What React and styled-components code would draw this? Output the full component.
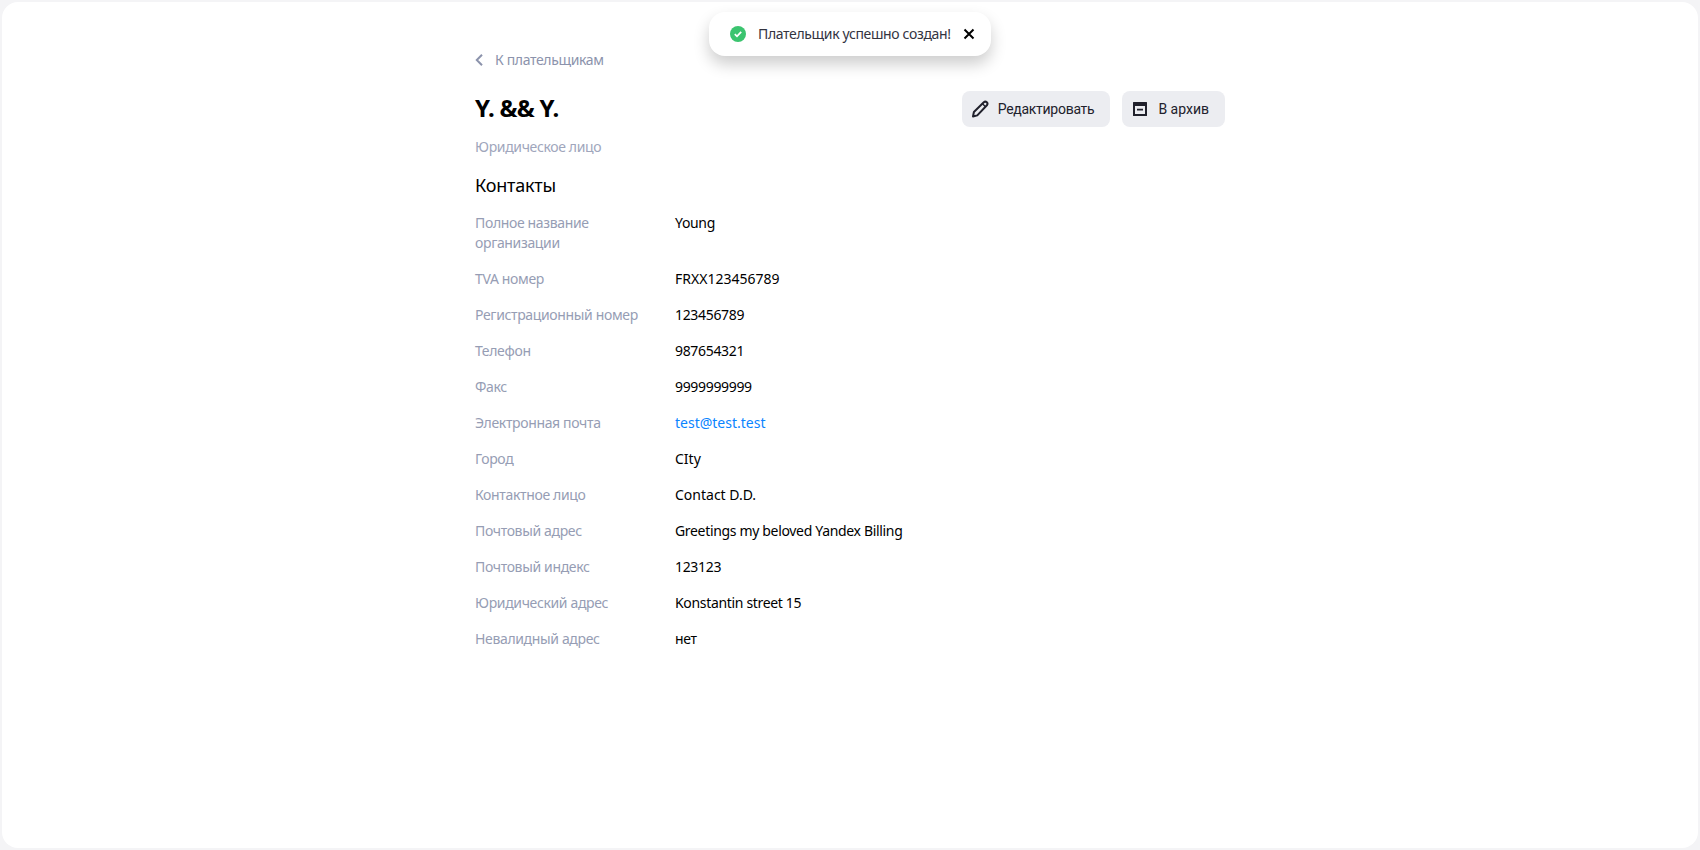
import React from 'react'
import styled, { createGlobalStyle } from 'styled-components'

const GlobalStyle = createGlobalStyle`
    html, body {
        margin: 0;
        height: 100%;
        background: #f4f4f6;
    }
    #root {
        height: 100%;
    }
`

const Frame = styled.div`
    box-sizing: border-box;
    height: 850px;
    padding: 2px;
    position: relative;
    overflow: hidden;
    font-family: "Noto Sans", "Open Sans", sans-serif;
    letter-spacing: -0.35px;
`

const Panel = styled.main`
    box-sizing: border-box;
    height: 100%;
    background: #fff;
    border-radius: 16px;
    padding: 47px 473px 0;
`

const Toast = styled.div`
    position: absolute;
    top: 12px;
    left: 709px;
    width: 282px;
    height: 44px;
    box-sizing: border-box;
    padding: 0 16px 0 21px;
    display: flex;
    align-items: center;
    background: #fff;
    border-radius: 16px;
    box-shadow: 0 8px 16px rgba(0, 0, 0, 0.2);
    color: #33333f;
    font-size: 14px;
`

const ToastText = styled.span`
    margin: 0 0 2px 12px;
    flex: 1;
    white-space: nowrap;
`

const Back = styled.a`
    display: flex;
    align-items: center;
    gap: 12px;
    height: 20px;
    color: #8c93ac;
    font-size: 14px;

    & > svg {
        margin-top: 2px;
    }
`

const Head = styled.div`
    display: flex;
    justify-content: space-between;
    align-items: center;
    margin-top: 22px;
    height: 36px;
`

const Title = styled.h1`
    margin: -4px 0 0;
    font-size: 24px;
    font-weight: 700;
    letter-spacing: -0.7px;
    color: #000;
`

const Actions = styled.div`
    display: flex;
    gap: 12px;
`

const Button = styled.button`
    display: flex;
    align-items: center;
    gap: 8px;
    height: 36px;
    padding: 0 16px 0 10px;
    border: 0;
    border-radius: 8px;
    background: #ecedf1;
    color: #21212c;
    font-family: Roboto, Inter, sans-serif;
    font-size: 14px;
    letter-spacing: ${p => p.$spacing || '0'};
`

const Kind = styled.div`
    margin-top: 10px;
    color: #a0a6bc;
    font-size: 14px;
    line-height: 20px;
`

const Section = styled.h2`
    margin: 14px 0 0;
    font-size: 18px;
    font-weight: 400;
    letter-spacing: -0.2px;
    line-height: 28px;
    color: #000;
`

const Rows = styled.dl`
    margin: 14px 0 0;
    display: grid;
    grid-template-columns: 200px 1fr;
    row-gap: 16px;
    font-size: 14px;
    line-height: 20px;
`

const Label = styled.dt`
    color: #969db4;
    width: 175px;
`

const Value = styled.dd`
    margin: 0;
    color: ${p => (p.$link ? '#0a84ff' : '#000')};
    letter-spacing: ${p => (p.$wide ? '0' : '-0.33px')};
`

const rows = [
    ['Полное название организации', 'Young'],
    ['TVA номер', 'FRXX123456789', false, true],
    ['Регистрационный номер', '123456789'],
    ['Телефон', '987654321'],
    ['Факс', '9999999999'],
    ['Электронная почта', 'test@test.test', true, true],
    ['Город', 'CIty', false, true],
    ['Контактное лицо', 'Contact D.D.', false, true],
    ['Почтовый адрес', 'Greetings my beloved Yandex Billing'],
    ['Почтовый индекс', '123123'],
    ['Юридический адрес', 'Konstantin street 15'],
    ['Невалидный адрес', 'нет'],
]

function App() {
    return (
        <Frame>
            <GlobalStyle />
            <Panel>
                <Back>
                    <svg width="8" height="14" viewBox="0 0 8 14" fill="none">
                        <path d="M7 1.800 1.800 7 7 12.200" stroke="#8c93ac" strokeWidth="2" />
                    </svg>
                    К плательщикам
                </Back>
                <Head>
                    <Title>Y. &amp;&amp; Y.</Title>
                    <Actions>
                        <Button $spacing="-0.28px">
                            <svg width="18" height="18" viewBox="0 0 18 18" fill="none">
                                <path d="M1 16.500 1.900 12 11.800 2.200a2.200 2.200 0 0 1 3.100 3.100L5.300 15.400Z" stroke="#21212c" strokeWidth="2" strokeLinejoin="round" />
                                <path d="M10.500 3.800l3 3" stroke="#21212c" strokeWidth="1.400" />
                            </svg>
                            Редактировать
                        </Button>
                        <Button>
                            <svg width="18" height="18" viewBox="0 0 18 18">
                                <path fillRule="evenodd" d="M1.500 2h13a.5.5 0 0 1 .5.5v13a.5.5 0 0 1-.5.5h-13a.5.5 0 0 1-.5-.5v-13a.5.5 0 0 1 .5-.5ZM3 6v8h10V6ZM5 8.800h6v1.600H5Z" fill="#21212c" />
                            </svg>
                            В архив
                        </Button>
                    </Actions>
                </Head>
                <Kind>Юридическое лицо</Kind>
                <Section>Контакты</Section>
                <Rows>
                    {rows.map(([label, value, link, wide]) => (
                        <React.Fragment key={label}>
                            <Label>{label}</Label>
                            <Value $link={link} $wide={wide}>{value}</Value>
                        </React.Fragment>
                    ))}
                </Rows>
            </Panel>
            <Toast>
                <svg width="16" height="16" viewBox="0 0 16 16">
                    <circle cx="8" cy="8" r="8" fill="#3bc46f" />
                    <path d="M4.800 8.200 7 10.300 11.200 5.900" fill="none" stroke="#fff" strokeWidth="1.800" />
                </svg>
                <ToastText>Плательщик успешно создан!</ToastText>
                <svg width="12" height="12" viewBox="0 0 12 12">
                    <path d="M1.500 1.500l9 9M10.500 1.500l-9 9" stroke="#000" strokeWidth="2" />
                </svg>
            </Toast>
        </Frame>
    )
}

export default App
